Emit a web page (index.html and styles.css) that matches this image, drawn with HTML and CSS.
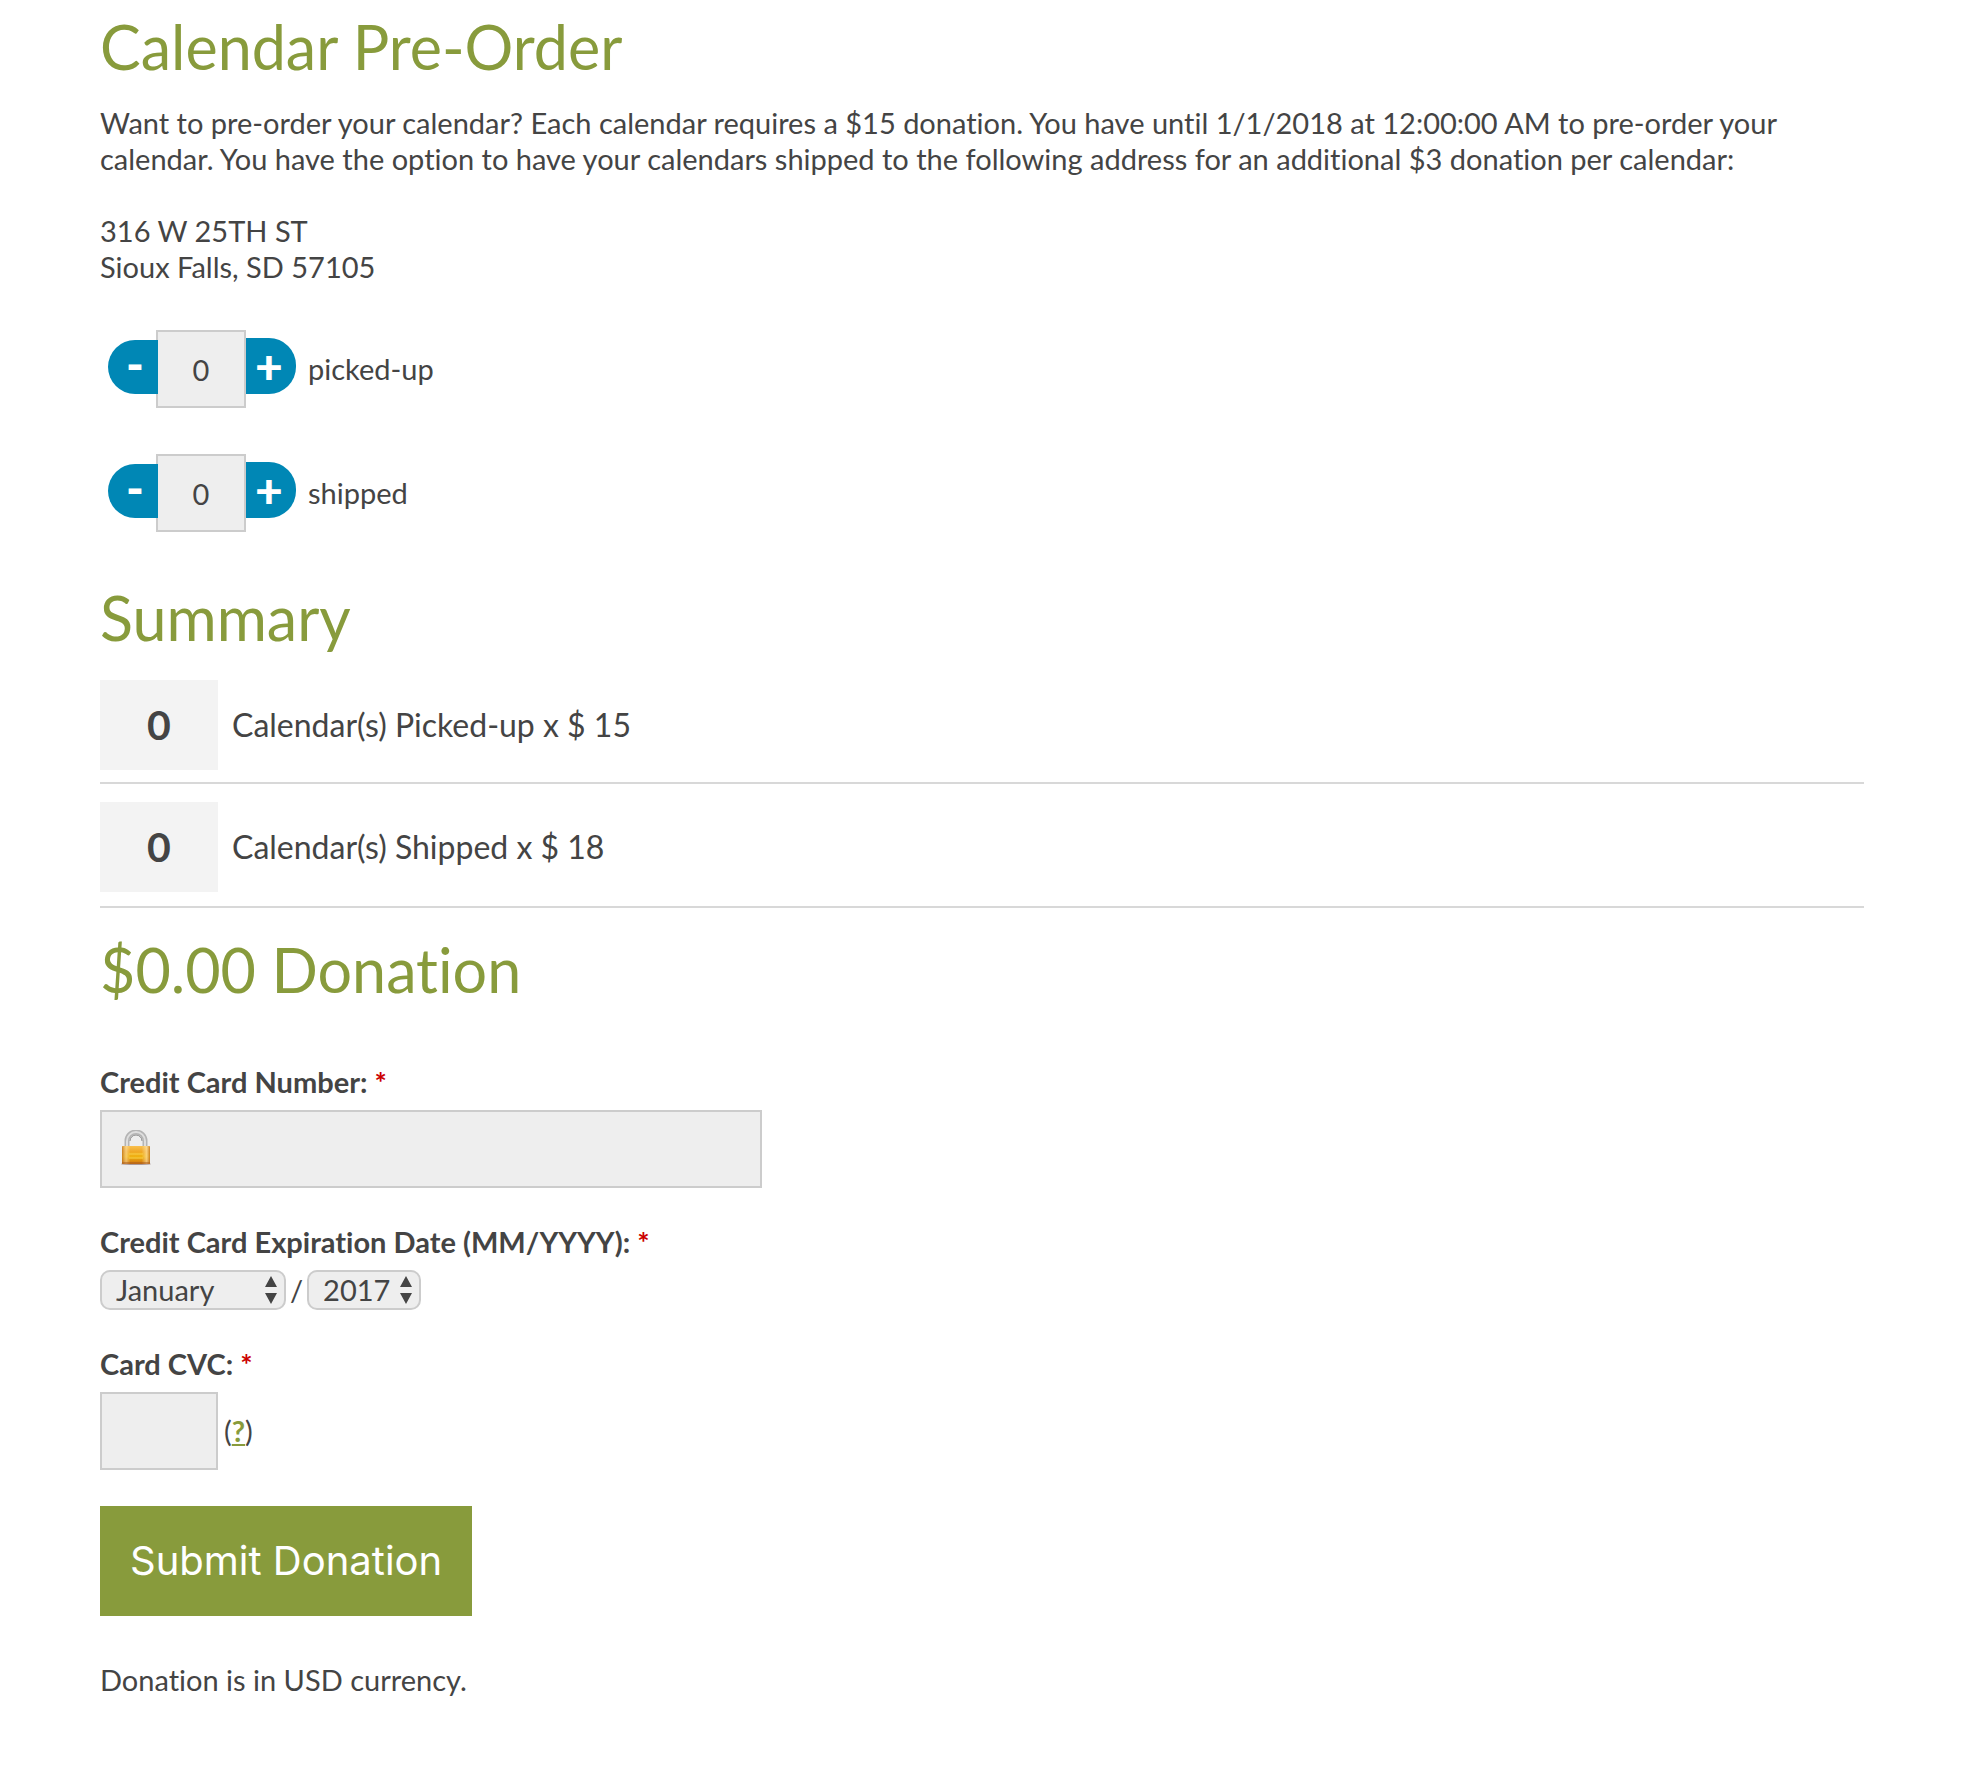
FILE: index.html
```html
<!DOCTYPE html>
<html lang="en">
<head>
    <meta charset="UTF-8">
    <meta name="viewport" content="width=device-width, initial-scale=1.0">
    <title>Calendar Pre-Order</title>
    <link rel="stylesheet" href="styles.css">
</head>
<body>
    <form class="order-form" id="orderForm">
        <h1>Calendar Pre-Order</h1>
        <p class="intro">Want to pre-order your calendar? Each calendar requires a $15 donation. You have until 1/1/2018 at 12:00:00 AM to pre-order your calendar. You have the option to have your calendars shipped to the following address for an additional $3 donation per calendar:</p>
        <address>316 W 25TH ST<br>Sioux Falls, SD 57105</address>

        <div class="quantity">
            <button type="button" class="minus" aria-label="One less picked-up">-</button>
            <input type="text" id="pickedUp" value="0">
            <button type="button" class="plus" aria-label="One more picked-up">+</button>
            <label for="pickedUp">picked-up</label>
        </div>
        <div class="quantity">
            <button type="button" class="minus" aria-label="One less shipped">-</button>
            <input type="text" id="shipped" value="0">
            <button type="button" class="plus" aria-label="One more shipped">+</button>
            <label for="shipped">shipped</label>
        </div>

        <h2>Summary</h2>
        <div class="summary-row">
            <strong id="pickedUpCount">0</strong>
            <span>Calendar(s) Picked-up x $ 15</span>
        </div>
        <div class="summary-row">
            <strong id="shippedCount">0</strong>
            <span>Calendar(s) Shipped x $ 18</span>
        </div>
        <h2 class="total"><span id="total">$0.00</span> Donation</h2>

        <div class="field">
            <label for="cardNumber">Credit Card Number: <span class="required">*</span></label>
            <div class="card-number">
                <input type="text" id="cardNumber">
                <svg class="lock" viewBox="0 0 30 36" aria-hidden="true">
                    <defs>
                        <linearGradient id="gold" x1="0" y1="0" x2="0" y2="1">
                            <stop offset="0" stop-color="#f9c04f"/>
                            <stop offset="0.3" stop-color="#f0a928"/>
                            <stop offset="0.6" stop-color="#efb10f"/>
                            <stop offset="1" stop-color="#cf7210"/>
                        </linearGradient>
                        <linearGradient id="edge">
                            <stop offset="0" stop-color="#b96a14" stop-opacity="0.7"/>
                            <stop offset="0.15" stop-color="#ffe9b8" stop-opacity="0.5"/>
                            <stop offset="0.3" stop-color="#ffe9b8" stop-opacity="0"/>
                            <stop offset="0.7" stop-color="#ffe9b8" stop-opacity="0"/>
                            <stop offset="0.88" stop-color="#ffe9b8" stop-opacity="0.6"/>
                            <stop offset="1" stop-color="#b96a14" stop-opacity="0.7"/>
                        </linearGradient>
                    </defs>
                    <ellipse cx="15" cy="34" rx="15" ry="1" fill="#a99"/>
                    <path d="M6 17V11a9 9 0 0 1 18 0v6" fill="none" stroke="#b4b4b4" stroke-width="5"/>
                    <path d="M6 17V11a9 9 0 0 1 18 0v6" fill="none" stroke="#dedede" stroke-width="2"/>
                    <path d="M9 11a6 6 0 0 1 12 0" fill="none" stroke="#8d8d8d" stroke-width="1"/>
                    <rect x="1" y="16" width="28" height="18" rx="1" fill="url(#gold)"/>
                    <rect x="1" y="16" width="28" height="18" rx="1" fill="url(#edge)"/>
                    <path d="M8 24h14M8 28h14" stroke="#f8d04a" stroke-width="1"/>
                    <path d="M1 33h28" stroke="#a85c1c" stroke-width="1"/>
                </svg>
            </div>
        </div>

        <div class="field">
            <label for="expMonth">Credit Card Expiration Date (MM/YYYY): <span class="required">*</span></label>
            <div class="dates">
                <div class="select month">
                    <select id="expMonth">
                        <option>January</option>
                        <option>February</option>
                        <option>March</option>
                        <option>April</option>
                        <option>May</option>
                        <option>June</option>
                        <option>July</option>
                        <option>August</option>
                        <option>September</option>
                        <option>October</option>
                        <option>November</option>
                        <option>December</option>
                    </select>
                    <svg class="arrows" viewBox="0 0 12 28" aria-hidden="true"><path d="M0 11L6 0l6 11zM0 17l6 11 6-11z"/></svg>
                </div>
                <span>/</span>
                <div class="select year">
                    <select id="expYear" aria-label="Expiration year">
                        <option>2017</option>
                        <option>2018</option>
                        <option>2019</option>
                        <option>2020</option>
                        <option>2021</option>
                    </select>
                    <svg class="arrows" viewBox="0 0 12 28" aria-hidden="true"><path d="M0 11L6 0l6 11zM0 17l6 11 6-11z"/></svg>
                </div>
            </div>
        </div>

        <div class="field">
            <label for="cvc">Card CVC: <span class="required">*</span></label>
            <div class="cvc">
                <input type="text" id="cvc">
                <span>(<a href="#cvc">?</a>)</span>
            </div>
        </div>

        <button type="submit" class="submit-button">Submit Donation</button>
        <p class="currency">Donation is in USD currency.</p>
    </form>

    <script>
    const prices = { pickedUp: 15, shipped: 18 };

    function updateTotal() {
        let total = 0;
        for (const id in prices) {
            const count = parseInt(document.getElementById(id).value) || 0;
            document.getElementById(id + 'Count').textContent = count;
            total += count * prices[id];
        }
        document.getElementById('total').textContent = '$' + total.toFixed(2);
    }

    document.querySelectorAll('.quantity').forEach(function(row) {
        const input = row.querySelector('input');
        row.querySelector('.minus').addEventListener('click', function() {
            input.value = Math.max(0, (parseInt(input.value) || 0) - 1);
            updateTotal();
        });
        row.querySelector('.plus').addEventListener('click', function() {
            input.value = (parseInt(input.value) || 0) + 1;
            updateTotal();
        });
        input.addEventListener('input', updateTotal);
    });

    document.getElementById('orderForm').addEventListener('submit', function(e) {
        e.preventDefault();
    });
    </script>
</body>
</html>
```
FILE: styles.css
```css
* {
    margin: 0;
    padding: 0;
    box-sizing: border-box;
}
body {
    background-color: #fff;
    color: #444;
    font-family: Lato, sans-serif;
    font-size: 29px;
    font-variant-ligatures: none;
    line-height: 36px;
}
.order-form {
    padding: 7px 120px 60px 100px;
}
h1, h2 {
    color: #889b3c;
    font-size: 61px;
    font-weight: 400;
    line-height: 80px;
}
h1 {
    margin-bottom: 18px;
}
address {
    margin: 36px 0 45px;
    font-style: normal;
}
input, select, button {
    color: inherit;
    font: inherit;
}
input {
    height: 78px;
    background-color: #eee;
    border: 2px solid #ccc;
}

/* Quantity pickers */
.quantity {
    display: flex;
    align-items: center;
    height: 78px;
    margin-bottom: 46px;
    padding-left: 8px;
}
.quantity input {
    width: 90px;
    margin-left: -2px;
    text-align: center;
}
.quantity button {
    width: 50px;
    height: 56px;
    margin-bottom: 6px;
    padding-right: 4px;
    background-color: #0087b5;
    border: none;
    color: #fff;
    font-size: 48px;
    font-weight: 900;
    line-height: 48px;
    cursor: pointer;
}
.quantity .minus {
    z-index: 1;
    height: 54px;
    margin-bottom: 4px;
    padding: 0 0 8px 4px;
    border-radius: 27px 0 0 27px;
}
.quantity .plus {
    border-radius: 0 27px 27px 0;
}
.quantity label {
    margin-left: 12px;
}

/* Summary */
.quantity + h2 {
    margin-bottom: 22px;
}
.summary-row {
    display: flex;
    align-items: center;
    gap: 14px;
    margin-bottom: 18px;
    padding-bottom: 12px;
    border-bottom: 2px solid #d8d8d8;
    font-size: 32px;
}
.summary-row + .summary-row {
    padding-bottom: 14px;
}
.summary-row strong {
    width: 118px;
    background-color: #f3f3f3;
    font-size: 41px;
    line-height: 90px;
    text-align: center;
}
.total {
    margin: 22px 0 54px;
}

/* Card fields */
.field {
    margin-bottom: 36px;
}
.field label {
    display: block;
    margin-bottom: 10px;
    font-weight: 700;
}
.required {
    color: #c00;
}
.card-number {
    position: relative;
    width: 662px;
    max-width: 100%;
}
.card-number input {
    display: block;
    width: 100%;
    padding-left: 64px;
}
.lock {
    position: absolute;
    top: 20px;
    left: 21px;
    width: 30px;
    height: 36px;
}
.dates {
    display: flex;
    align-items: center;
    gap: 4px;
}
.select {
    position: relative;
}
.select select {
    display: block;
    width: 100%;
    height: 40px;
    padding-left: 14px;
    appearance: none;
    background-color: #eee;
    border: 2px solid #ccc;
    border-radius: 10px;
}
.month {
    width: 186px;
}
.year {
    width: 114px;
}
.arrows {
    position: absolute;
    top: 6px;
    right: 9px;
    width: 12px;
    height: 28px;
    fill: #444;
    pointer-events: none;
}
.cvc {
    display: flex;
    align-items: center;
    gap: 6px;
}
.cvc input {
    width: 118px;
    padding: 0 16px;
}
.cvc a {
    color: #889b3c;
    font-weight: 700;
}
.submit-button {
    height: 110px;
    padding: 0 30px;
    background-color: #889b3c;
    border: none;
    color: #fff;
    font-family: Inter, sans-serif;
    font-size: 40px;
    cursor: pointer;
}
.currency {
    margin-top: 46px;
}
```
